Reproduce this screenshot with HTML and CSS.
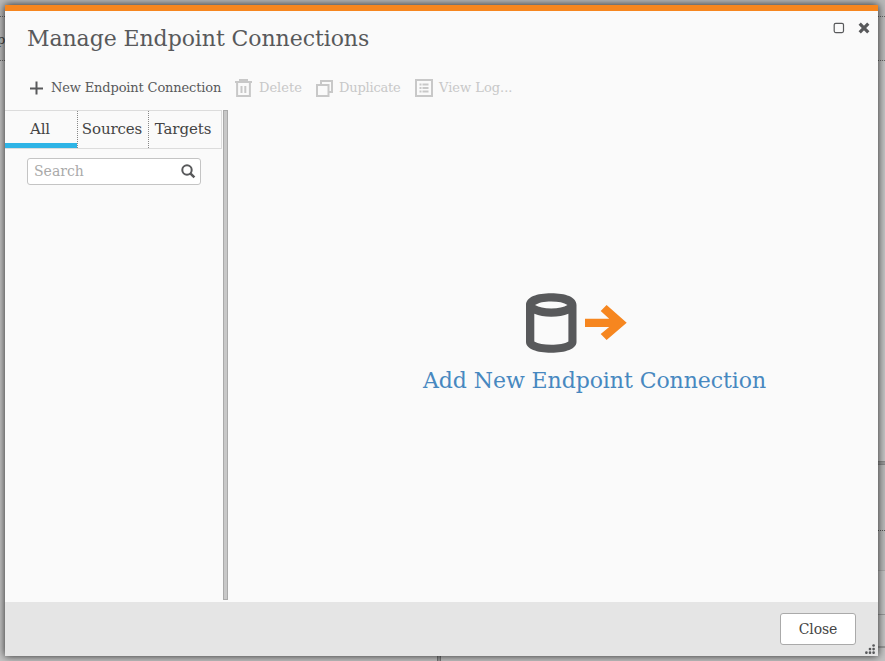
FILE: index.html
```html
<!DOCTYPE html>
<html lang="en">
<head>
<meta charset="utf-8">
<title>Manage Endpoint Connections</title>
<link rel="stylesheet" href="styles.css">
</head>
<body>
<div class="backdrop">
  <div class="row row-top"></div>
  <div class="row row-head"><span>p</span></div>
  <div class="row row-main"></div>
  <div class="row row-split"></div>
  <div class="row row-a"></div>
  <div class="row row-b"></div>
  <div class="row row-c"></div>
  <div class="row row-d"></div>
  <div class="row row-end"><i></i></div>
</div>
<div class="dialog">
  <header class="title-bar">
    <h1>Manage Endpoint Connections</h1>
    <div class="window-tools">
      <svg width="12" height="12" viewBox="0 0 12 12"><rect x="1.2" y="1.3" width="9.3" height="9.3" rx="1.5" fill="none" stroke="#58595b" stroke-width="1.2"/></svg>
      <svg width="12" height="12" viewBox="0 0 12 12"><path d="M1.7 1.7l8.6 8.6M10.3 1.7l-8.6 8.6" stroke="#58595b" stroke-width="3.2"/></svg>
    </div>
  </header>
  <nav class="toolbar">
    <a class="tool new"><svg width="14" height="14" viewBox="0 0 14 14"><path d="M6.500 .5v13M0 7.500h13" stroke="#58595b" stroke-width="2"/></svg><span>New Endpoint Connection</span></a>
    <a class="tool delete"><svg width="17" height="18" viewBox="0 0 17 18"><path d="M0 3h17M4 1h9M2.1 3v13.9h12.8V3" fill="none" stroke="#c8c8c8" stroke-width="2"/><path d="M6.5 7v7M10.3 7v7" stroke="#c8c8c8" stroke-width="2"/></svg><span>Delete</span></a>
    <a class="tool duplicate"><svg width="17" height="18" viewBox="0 0 17 18"><path d="M1 6h11.500v11H1zM5 5V2h11v11h-3" fill="none" stroke="#c8c8c8" stroke-width="2"/></svg><span>Duplicate</span></a>
    <a class="tool log"><svg width="18" height="18" viewBox="0 0 18 18"><path d="M1 1h16v16H1z" fill="none" stroke="#c8c8c8" stroke-width="2"/><path d="M4.5 5.5h2M4.5 9h2M4.5 12.5h2M7.5 5.5h6M7.5 9h6M7.5 12.5h6" stroke="#c8c8c8" stroke-width="2"/></svg><span>View Log...</span></a>
  </nav>
  <main class="content">
    <aside class="sidebar">
      <div class="tabs"><div class="tab active">All</div><div class="tab">Sources</div><div class="tab">Targets</div></div>
      <div class="search"><span>Search</span><svg width="15" height="15" viewBox="0 0 15 15"><circle cx="6" cy="6" r="4.7" fill="none" stroke="#58595b" stroke-width="2"/><path d="M9.3 9.3l4.1 4.1" stroke="#58595b" stroke-width="2.5"/></svg></div>
    </aside>
    <div class="splitter"></div>
    <section class="empty">
      <svg width="101" height="61" viewBox="0 0 101 61"><path fill-rule="evenodd" fill="#58595b" d="M0 12C0 4 11 .3 25.2.3S50.5 4 50.5 12v37c0 7-11 10.7-25.3 10.7S0 56 0 49zM9 12c4 2.4 9 3.4 16.2 3.4S38 14.400 41.500 12C38 9.500 32.500 8.500 25.200 8.500S13 9.500 9 12zM8.300 20.800V48.500C12 50.700 18 51.700 25.200 51.700S39 50.700 42.400 48.500V20.800C38 22.800 32 23.700 25.200 23.700S13 22.800 8.300 20.800z"/><path fill="#f6861f" d="M59 25.800h24.200l-8.500-7.800 5.900-6L100.700 29.800 80.600 47l-5.900-6 8.500-7H59z"/></svg>
      <a>Add New Endpoint Connection</a>
    </section>
  </main>
  <footer class="footer">
    <button>Close</button>
    <svg class="grip" width="10" height="10" viewBox="0 0 10 10" fill="#58595b"><circle cx="8.600" cy="1.500" r="1.350"/><circle cx="5" cy="5.100" r="1.350"/><circle cx="8.600" cy="5.100" r="1.350"/><circle cx="1.400" cy="8.700" r="1.350"/><circle cx="5" cy="8.700" r="1.350"/><circle cx="8.600" cy="8.700" r="1.350"/></svg>
  </footer>
</div>
</body>
</html>
```
FILE: styles.css
```css
* { box-sizing: border-box; }
body { margin: 0; width: 885px; height: 661px; overflow: hidden; font-family: "DejaVu Serif", serif; color: #58595b; }
svg { display: block; flex: none; }
.backdrop { display: flex; flex-direction: column; height: 661px; background: #c4c4c4; }
.row { flex: none; margin-left: 20px; border-bottom: 1px solid #999; }
.row-top { height: 17px; margin-left: 0; background: #b9b9b9; border-bottom: 1px dotted #666; }
.row-head { height: 44px; margin-left: 0; background: #bbb; border-bottom: 1px dotted #666; font-size: 13px; line-height: 46px; color: #444; }
.row-head span { display: block; margin-left: -3px; }
.row-main { height: 401px; border-bottom-color: #8a8a8a; }
.row-split { height: 3px; background: #999; border-color: #888; }
.row-a { height: 66px; background: #bbb; border-bottom: 1px dotted #555; }
.row-b { height: 40px; background: #bbb; border-color: #aaa; }
.row-c { height: 44px; }
.row-d { height: 33px; border-bottom-width: 2px; border-color: #999; }
.row-end { flex: 1; border: 0; padding-left: 417px; }
.row-end i { display: block; width: 4px; height: 13px; background: #999; border: solid #777; border-width: 0 1px; }
.dialog { position: absolute; left: 5px; top: 5px; width: 873px; height: 651px; display: flex; flex-direction: column; background: #fafafa; border-top: 6px solid #f6861f; box-shadow: 0 0 8px rgba(0,0,0,.8); }
.title-bar { height: 54px; padding: 11px 8px 0 22px; display: flex; justify-content: space-between; }
h1 { margin: 1px 0 0; font-size: 22px; line-height: 32px; font-weight: 400; letter-spacing: -.07px; }
.window-tools { display: flex; gap: 13px; }
.toolbar { height: 45px; display: flex; align-items: center; padding: 0 0 0 25px; font-size: 13px; }
.tool { display: flex; align-items: center; gap: 7px; height: 20px; white-space: nowrap; color: #c8c8c8; }
.tool span { line-height: 18px; }
.new { width: 205px; color: #58595b; letter-spacing: -.15px; }
.delete { width: 81px; }
.duplicate { width: 99px; gap: 6px; letter-spacing: -.2px; }
.log { gap: 6px; }
.content { flex: 1; min-height: 0; display: flex; }
.sidebar { width: 218px; }
.tabs { display: grid; grid-template-columns: 72px 71px 73px; grid-template-rows: 37px; width: 217px; height: 39px; border: 1px solid #dcdcdc; border-left: 0; color: #444; font-size: 15px; line-height: 36px; text-align: center; }
.tab { border-left: 1px dotted #888; padding-right: 2px; letter-spacing: -.1px; }
.tab:last-child { padding-right: 4px; }
.tab.active { border-left: 0; border-bottom: 5px solid #2eb4e6; }
.search { margin: 9px 0 0 22px; width: 174px; height: 27px; border: 1px solid #c4c4c4; border-radius: 3px; background: #fff; display: flex; align-items: center; justify-content: space-between; padding: 0 4px 0 6px; color: #aaa; font-size: 14px; }
.search span { margin-top: -1px; }
.splitter { width: 5px; height: 490px; background: #c8c8c8; border: 1px solid #aaa; }
.empty { flex: 1; padding-top: 183px; }
.empty svg { margin-left: 298px; }
.empty a { display: block; margin: 11px 0 0 195px; color: #4788c0; font-size: 22px; line-height: 32px; white-space: nowrap; letter-spacing: -.07px; }
.footer { height: 54px; background: #e5e5e5; padding: 11px 22px 0 0; position: relative; display: flex; justify-content: flex-end; }
button { width: 76px; height: 32px; padding: 0; background: #fff; border: 1px solid #aaa; border-radius: 3px; color: #444; font: 14px "DejaVu Serif", serif; letter-spacing: -.1px; }
.grip { position: absolute; right: 3px; bottom: 2px; }
```
